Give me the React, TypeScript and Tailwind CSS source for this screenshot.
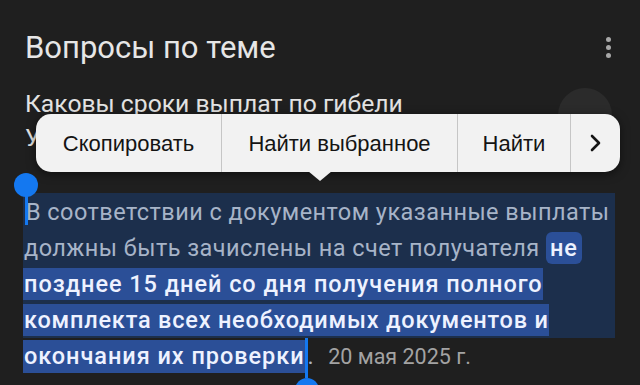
import React from "react";

export default function App() {
  return (
    <div className="relative w-[640px] h-[385px] overflow-hidden bg-[#1f1f1f] font-['Roboto',sans-serif]">
      {/* header */}
      <div className="flex items-center justify-between pl-[25px] pr-[29px] pt-[25px] h-[70px]">
        <h1 className="text-[31px] leading-[40px] text-[#e6e6e6] font-normal">Вопросы по теме</h1>
        <div className="flex flex-col gap-[3px] items-center">
          <span className="block w-[5px] h-[5px] rounded-full bg-[#a8a8a8]" />
          <span className="block w-[5px] h-[5px] rounded-full bg-[#a8a8a8]" />
          <span className="block w-[5px] h-[5px] rounded-full bg-[#a8a8a8]" />
        </div>
      </div>

      {/* question */}
      <div className="flex justify-between pl-[25px] pr-[28px] pt-[17px] h-[102px]">
        <div className="text-[24.7px] leading-[34px] text-[#e3e3e3]">
          <div>Каковы сроки выплат по гибели</div>
          <div>УБД?</div>
        </div>
        <div className="mt-[1px] w-[54px] h-[54px] rounded-full bg-[#2b2b2b]" />
      </div>

      {/* answer paragraph */}
      <div className="relative pl-[23px] mt-[21px] text-[23.5px] leading-[36px] tracking-[0.45px]">
        {/* left handle */}
        <div className="absolute left-[14px] top-[-20px] flex flex-col items-center">
          <div className="w-[24px] h-[24px] rounded-full bg-[#1478f0]" />
          <div className="-mt-[12px] w-[3px] h-[40px] bg-[#1478f0]" />
        </div>
        <div className="w-[592px] bg-[#1c2f4c] pt-[1px]">
          <div className="text-[#a7b4c8] whitespace-nowrap pl-[3px]">В соответствии с документом указанные выплаты</div>
          <div className="whitespace-nowrap pl-[1px]">
            <span className="text-[#a7b4c8]">должны быть зачислены на счет получателя </span>
            <span className="inline-block rounded-[6px] bg-[#2b4f97] px-[4px] leading-[32px] font-medium tracking-[0.9px] text-[#eef2ff]">не</span>
          </div>
          <div className="whitespace-nowrap">
            <span className="inline-block bg-[#2b4f97] pl-[1px] leading-[32px] font-medium tracking-[0.95px] text-[#eef2ff]">позднее 15 дней со дня получения полного</span>
          </div>
          <div className="whitespace-nowrap">
            <span className="inline-block bg-[#2b4f97] pl-[1px] leading-[32px] font-medium tracking-[0.8px] text-[#eef2ff]">комплекта всех необходимых документов и</span>
          </div>
        </div>
        <div className="relative whitespace-nowrap">
          <span className="inline-block bg-[#2b4f97] pl-[1px] leading-[33px] font-medium tracking-[0.95px] text-[#eef2ff]">окончания их проверки</span>
          <span className="inline-block w-[3px] h-[40px] align-top bg-[#1478f0] relative">
            <span className="absolute left-[-10px] top-[40px] w-[24px] h-[24px] rounded-full bg-[#1478f0]" />
          </span>
          <span className="text-[#a7b4c8]">.</span>
          <span className="ml-[14px] text-[21.5px] tracking-normal text-[#a3a3a3]">20 мая 2025 г.</span>
        </div>
      </div>

      {/* context menu */}
      <div className="absolute left-[36px] top-[114px] w-[584px] h-[58px] rounded-[15px] bg-[#f2f2f2] shadow-[0_2px_10px_rgba(0,0,0,0.5)] flex items-stretch font-['Liberation_Sans',sans-serif] text-[22px] text-[#141414]">
        <div className="w-[186px] flex items-center justify-center border-r border-[#c6c6c6]">Скопировать</div>
        <div className="w-[236px] flex items-center justify-center border-r border-[#c6c6c6]">Найти выбранное</div>
        <div className="w-[113px] flex items-center justify-center border-r border-[#c6c6c6]">Найти</div>
        <div className="flex-1 flex items-center justify-center">
          <svg width="14" height="20" viewBox="0 0 14 20" fill="none">
            <path d="M3 3 L10 10 L3 17" stroke="#141414" strokeWidth="2.6" strokeLinecap="round" strokeLinejoin="round" />
          </svg>
        </div>
        <div className="absolute left-[272px] bottom-[-9px] w-0 h-0 border-l-[12px] border-r-[12px] border-t-[10px] border-l-transparent border-r-transparent border-t-[#f2f2f2]" />
      </div>
    </div>
  );
}
